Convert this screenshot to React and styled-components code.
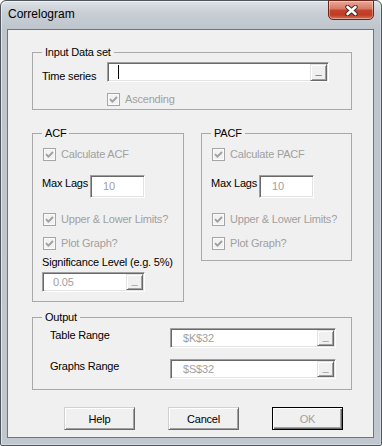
import React from "react";
import styled, { createGlobalStyle, css } from "styled-components";

const GlobalStyle = createGlobalStyle`
  html, body { margin: 0; padding: 0; background: #fff; }
  body { font-family: "Liberation Sans", Arial, sans-serif; font-size: 11px; }
  *, *::before, *::after { box-sizing: border-box; }
`;

const FONT = `"Liberation Sans", Arial, sans-serif`;

const Window = styled.div`
  width: 382px;
  height: 446px;
  display: flex;
  flex-direction: column;
  border: 1px solid #50565d;
  border-radius: 6px 6px 2px 2px;
  background: linear-gradient(180deg, #dde2e7 0px, #c8ced5 12px, #bec5cc 29px, #c1c7ce 100%);
  box-shadow: inset 1px 1px 0 rgba(255, 255, 255, 0.55), inset -1px -1px 0 rgba(255, 255, 255, 0.3);
`;

const TitleBar = styled.div`
  height: 28px;
  flex-shrink: 0;
  display: flex;
  align-items: flex-start;
  justify-content: space-between;
  padding-left: 7px;
`;

const Title = styled.span`
  font: 12px ${FONT};
  line-height: 15px;
  padding-top: 6px;
  color: #000;
`;

const CloseButton = styled.div`
  width: 46px;
  height: 20px;
  margin-top: -1px;
  margin-right: 7px;
  border: 1px solid #6e2418;
  border-radius: 0 0 5px 5px;
  display: flex;
  align-items: center;
  justify-content: center;
  background: linear-gradient(180deg, #e6a99a 0%, #d87b66 42%, #c4432b 52%, #bf3b24 78%, #d8735b 100%);
  box-shadow: inset 0 0 0 1px rgba(255, 255, 255, 0.35);
`;

const Client = styled.div`
  flex: 1;
  margin: 0 7px 7px 6px;
  background: #f0f0f0;
  border: 1px solid #70757a;
  padding: 16px 21px 0 24px;
  display: flex;
  flex-direction: column;
  font: 11px ${FONT};
  letter-spacing: -0.2px;
  color: #000;
`;

const Group = styled.fieldset`
  margin: ${(p) => p.$mt || 0}px 0 0 0;
  padding: 0 0 ${(p) => p.$pb}px 0;
  border: 1px solid #a9a9a9;
  min-width: 0;
  ${(p) => p.$w && css`width: ${p.$w}px; flex-shrink: 0;`}
`;

const Legend = styled.legend`
  padding: 0 3px;
  margin-left: 9px;
  line-height: 13px;
  font-size: 11px;
  color: #000;
`;

const Body = styled.div`
  display: flex;
  flex-direction: column;
  align-items: flex-start;
  padding-left: ${(p) => p.$pl}px;
`;

const Row = styled.div`
  display: flex;
  align-items: ${(p) => p.$align || "flex-start"};
  margin-top: ${(p) => p.$mt || 0}px;
  margin-left: ${(p) => p.$ml || 0}px;
`;

const Label = styled.span`
  flex-shrink: 0;
  white-space: nowrap;
  line-height: 13px;
  width: ${(p) => (p.$w ? `${p.$w}px` : "auto")};
  padding-top: ${(p) => p.$pt || 0}px;
  margin-top: ${(p) => p.$mt || 0}px;
  color: ${(p) => (p.$disabled ? "#a0a0a0" : "#000")};
`;

const TextBox = styled.div`
  width: ${(p) => p.$w}px;
  height: ${(p) => p.$h}px;
  flex-shrink: 0;
  display: flex;
  align-items: center;
  margin-top: ${(p) => p.$mt || 0}px;
  background: #fff;
  border: 1px solid;
  border-color: #a0a0a0 #ffffff #ffffff #a0a0a0;
  box-shadow: inset 1px 1px 0 #696969, inset -1px -1px 0 #e3e3e3;
  padding: 0 1px 0 ${(p) => p.$pl}px;
  color: ${(p) => (p.$disabled ? "#a0a0a0" : "#000")};
  line-height: 13px;
`;

const Value = styled.span`
  flex: 1;
  white-space: nowrap;
`;

const Caret = styled.span`
  width: 1px;
  height: 14px;
  background: #000;
`;

const DotButton = styled.span`
  margin-left: auto;
  width: 17px;
  height: ${(p) => p.$h || 16}px;
  flex-shrink: 0;
  display: flex;
  align-items: center;
  justify-content: center;
  padding-bottom: 3px;
  background: #f0f0f0;
  border: 1px solid;
  border-color: #e3e3e3 #696969 #696969 #e3e3e3;
  box-shadow: inset 1px 1px 0 #fff, inset -1px -1px 0 #a0a0a0;
  font: bold 11px ${FONT};
  line-height: 11px;
  color: ${(p) => (p.$disabled ? "#5a5a5a" : "#000")};
`;

const CheckRow = styled.div`
  display: flex;
  align-items: center;
  gap: 5px;
  height: 16px;
  margin-top: ${(p) => p.$mt || 0}px;
  margin-left: ${(p) => p.$ml || 0}px;
`;

const CheckBox = styled.span`
  width: 13px;
  height: 13px;
  flex-shrink: 0;
  display: flex;
  align-items: center;
  justify-content: center;
  border: 1px solid #a5a5a5;
  background: #f2f2f2;
  box-shadow: inset 0 0 0 1px #fbfbfb;
`;

const CheckText = styled.span`
  line-height: 13px;
  padding-top: 1px;
  white-space: nowrap;
  color: #a0a0a0;
`;

const GroupRow = styled.div`
  display: flex;
  align-items: flex-start;
  gap: 17px;
  margin-top: 17px;
`;

const ButtonRow = styled.div`
  display: flex;
  gap: 33px;
  margin-top: 17px;
  padding-left: 32px;
`;

const Button = styled.button`
  width: 71px;
  height: 23px;
  padding: 0;
  font: 11px ${FONT};
  letter-spacing: -0.2px;
  color: ${(p) => (p.disabled ? "#a0a0a0" : "#000")};
  background: #f0f0f0;
  border: 1px solid;
  border-color: #d0d0d0 #696969 #696969 #d0d0d0;
  box-shadow: inset 1px 1px 0 #fff, inset -1px -1px 0 #a0a0a0;
  ${(p) =>
    p.$default &&
    css`
      border-color: #000;
      box-shadow: inset 1px 1px 0 #fff, inset -1px -1px 0 #696969, inset -2px -2px 0 #a0a0a0;
    `}
`;

const Check = () => (
  <CheckBox>
    <svg width="9" height="9" viewBox="0 0 9 9">
      <path d="M1 4.2 L3.4 6.6 L8 2" fill="none" stroke="#a0a0a0" strokeWidth="1.9" />
    </svg>
  </CheckBox>
);

const CheckItem = ({ label, mt, ml }) => (
  <CheckRow $mt={mt} $ml={ml}>
    <Check />
    <CheckText>{label}</CheckText>
  </CheckRow>
);

const CloseX = () => (
  <svg width="13" height="11" viewBox="0 0 13 11">
    <path d="M2.5 2 L10.5 9 M10.5 2 L2.5 9" stroke="#3c2a28" strokeWidth="4.4" strokeLinecap="round" />
    <path d="M2.5 2 L10.5 9 M10.5 2 L2.5 9" stroke="#ffffff" strokeWidth="2.6" strokeLinecap="round" />
  </svg>
);

const CorrGroup = ({ name, width, pb, extra }) => (
  <Group $w={width} $pb={pb}>
    <Legend>{name}</Legend>
    <Body $pl={9}>
      <CheckItem label={`Calculate ${name}`} mt={6} ml={1} />
      <Row $mt={13}>
        <Label $w={48} $pt={2}>Max Lags</Label>
        <TextBox $w={55} $h={23} $pl={12} $disabled>
          <Value>10</Value>
        </TextBox>
      </Row>
      <CheckItem label="Upper & Lower Limits?" mt={13} ml={1} />
      <CheckItem label="Plot Graph?" mt={8} ml={1} />
      {extra}
    </Body>
  </Group>
);

export default function App() {
  return (
    <>
      <GlobalStyle />
      <Window>
        <TitleBar>
          <Title>Correlogram</Title>
          <CloseButton>
            <CloseX />
          </CloseButton>
        </TitleBar>
        <Client>
          <Group $pb={2}>
            <Legend>Input Data set</Legend>
            <Body $pl={9}>
              <Row $mt={3}>
                <Label $w={65} $pt={8}>Time series</Label>
                <TextBox $w={222} $h={20} $pl={10}>
                  <Caret />
                  <DotButton $h={17}>_</DotButton>
                </TextBox>
              </Row>
              <CheckItem label="Ascending" mt={8} ml={65} />
            </Body>
          </Group>

          <GroupRow>
            <CorrGroup
              name="ACF"
              width={152}
              pb={9}
              extra={
                <>
                  <Label $mt={5}>Significance Level (e.g. 5%)</Label>
                  <TextBox $w={103} $h={20} $pl={10} $mt={3} $disabled>
                    <Value>0.05</Value>
                    <DotButton $disabled>_</DotButton>
                  </TextBox>
                </>
              }
            />
            <CorrGroup name="PACF" width={151} pb={9} />
          </GroupRow>

          <Group $mt={9} $pb={10}>
            <Legend>Output</Legend>
            <Body $pl={17}>
              <Row $mt={4}>
                <Label $w={120} $pt={1}>Table Range</Label>
                <TextBox $w={166} $h={20} $pl={12} $disabled>
                  <Value>$K$32</Value>
                  <DotButton $disabled>_</DotButton>
                </TextBox>
              </Row>
              <Row $mt={11}>
                <Label $w={120} $pt={1}>Graphs Range</Label>
                <TextBox $w={166} $h={20} $pl={12} $disabled>
                  <Value>$S$32</Value>
                  <DotButton $disabled>_</DotButton>
                </TextBox>
              </Row>
            </Body>
          </Group>

          <ButtonRow>
            <Button>Help</Button>
            <Button>Cancel</Button>
            <Button $default disabled>OK</Button>
          </ButtonRow>
        </Client>
      </Window>
    </>
  );
}
